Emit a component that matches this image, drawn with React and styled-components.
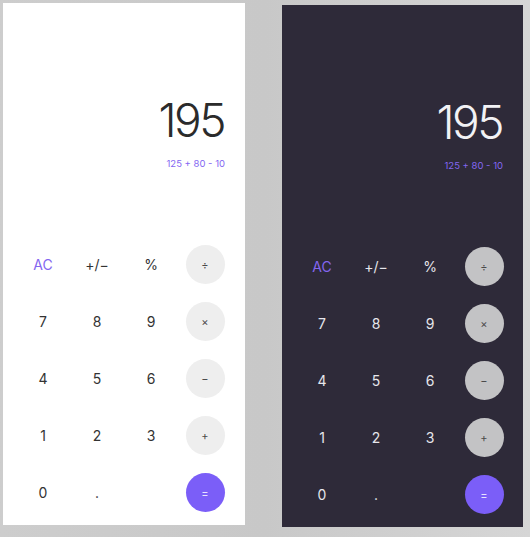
import React from 'react';
import styled, { createGlobalStyle, css } from 'styled-components';

const GlobalStyle = createGlobalStyle`
	html, body {
		margin: 0;
		padding: 0;
	}
	body {
		font-family: Inter, Roboto, "Noto Sans", sans-serif;
		background: linear-gradient(90deg, #cdcdcd 0%, #c8c8c8 50%, #d6d6d6 100%);
		min-height: 537px;
	}
`;

const Stage = styled.div`
	display: flex;
	align-items: flex-start;
	gap: 37px;
	padding: 3px 0 0 3px;
	height: 537px;
	box-sizing: border-box;
`;

const Panel = styled.div`
	width: ${p => p.dark ? 241 : 242}px;
	height: 522px;
	margin-top: ${p => p.dark ? 2 : 0}px;
	background: ${p => p.dark ? '#2e2a39' : '#ffffff'};
	display: flex;
	flex-direction: column;
	box-sizing: border-box;
`;

const Display = styled.div`
	flex: 1;
	display: flex;
	flex-direction: column;
	align-items: flex-end;
	padding: 94px 21px 0 0;
`;

const Result = styled.div`
	font-size: 46px;
	font-weight: 300;
	line-height: 1;
	letter-spacing: -2.5px;
	color: ${p => p.dark ? '#f2f2f5' : '#2b2b2b'};
`;

const Expression = styled.div`
	margin-top: 15px;
	margin-right: -1px;
	font-size: 9.5px;
	color: #8467f2;
`;

const Keypad = styled.div`
	display: grid;
	grid-template-columns: repeat(4, 54px);
	grid-auto-rows: 57px;
	padding: 0 13px 4px;
`;

const Key = styled.div`
	display: flex;
	align-items: center;
	justify-content: center;
	font-size: 14px;
	color: ${p => p.dark ? '#e6e6ec' : '#333333'};

	${p => p.accent && css`
		color: #8466f0;
	`}
`;

const Circle = styled.div`
	width: 39px;
	height: 39px;
	border-radius: 50%;
	display: flex;
	align-items: center;
	justify-content: center;
	font-size: 11px;
	background: ${p => p.dark ? '#c3c3c5' : '#eeeeee'};
	color: #4a4a4a;

	${p => p.primary && css`
		background: #7b5ef8;
		color: #e8e2ff;
	`}
`;

const rows = [
	[{ t: 'AC', accent: true }, { t: '+/\u2212' }, { t: '%' }, { t: '\u00f7', op: true }],
	[{ t: '7' }, { t: '8' }, { t: '9' }, { t: '\u00d7', op: true }],
	[{ t: '4' }, { t: '5' }, { t: '6' }, { t: '\u2212', op: true }],
	[{ t: '1' }, { t: '2' }, { t: '3' }, { t: '+', op: true }],
	[{ t: '0' }, { t: '.' }, { t: '' }, { t: '=', op: true, primary: true }],
];

const Calculator = ({ dark }) => (
	<Panel dark={dark}>
		<Display>
			<Result dark={dark}>195</Result>
			<Expression>125 + 80 - 10</Expression>
		</Display>
		<Keypad>
			{rows.flat().map((k, i) => (
				<Key key={i} dark={dark} accent={k.accent}>
					{k.op ? <Circle dark={dark} primary={k.primary}>{k.t}</Circle> : k.t}
				</Key>
			))}
		</Keypad>
	</Panel>
);

const App = () => (
	<>
		<GlobalStyle />
		<Stage>
			<Calculator />
			<Calculator dark />
		</Stage>
	</>
);

export default App;
